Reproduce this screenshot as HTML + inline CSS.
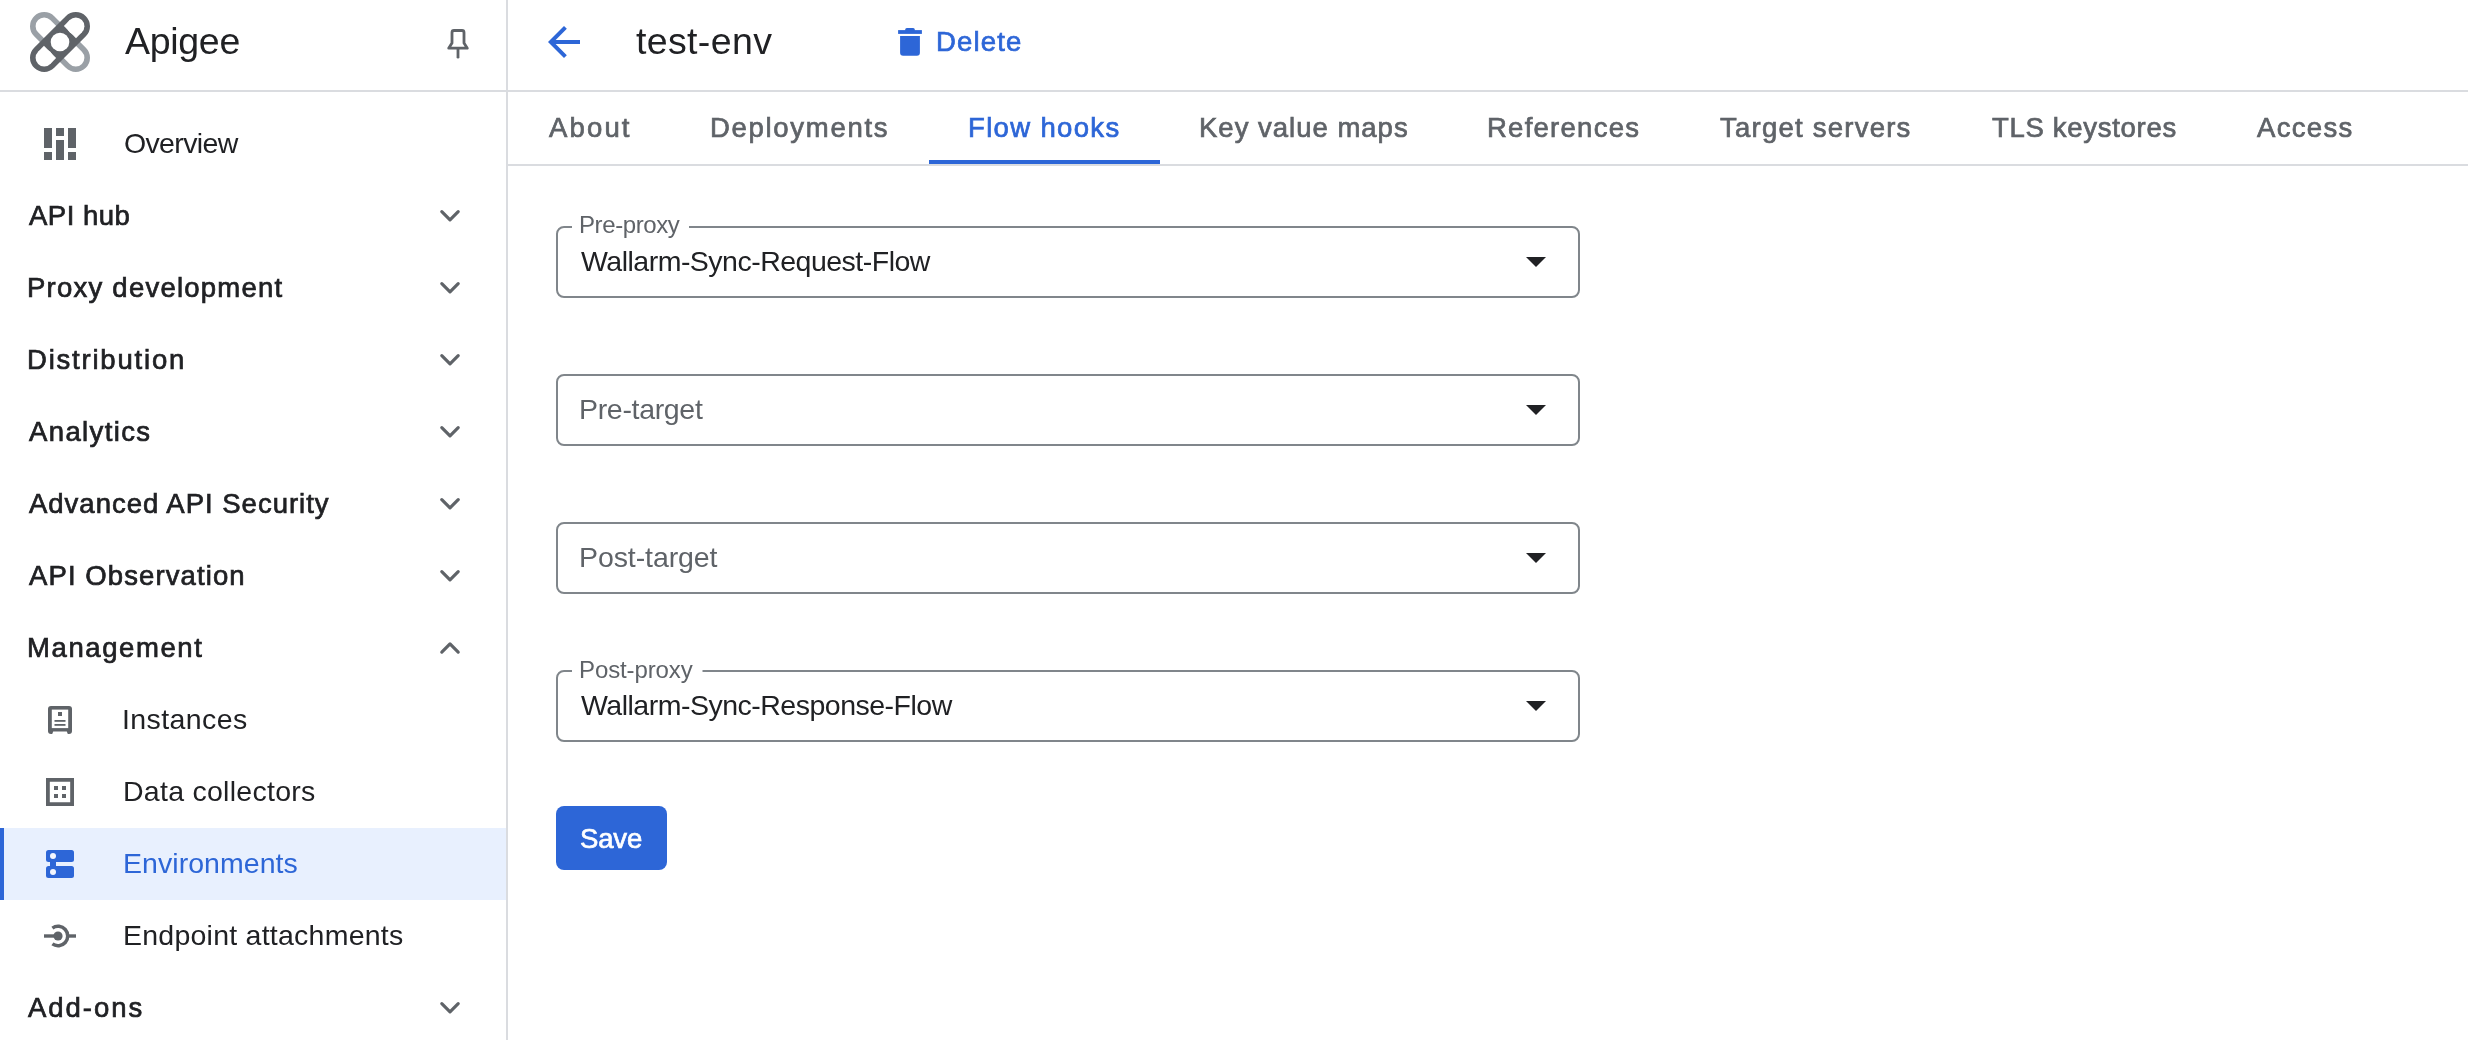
<!DOCTYPE html>
<html><head><meta charset="utf-8"><title>Apigee - test-env</title>
<style>
html,body{margin:0;padding:0;width:2468px;height:1040px;overflow:hidden;background:#ffffff;}
body{position:relative;font-family:"Liberation Sans",sans-serif;}
.t{position:absolute;white-space:nowrap;will-change:transform;font-family:"Liberation Sans",sans-serif;font-weight:400;}
svg.page{position:absolute;left:0;top:0;}
</style></head><body>
<svg class="page" width="2468" height="1040" viewBox="0 0 2468 1040">
<!-- environments highlight -->
<rect x="0" y="828" width="506" height="72" fill="#e8f0fe"/>
<rect x="0" y="828" width="4" height="72" fill="#2d66d7"/>
<!-- borders -->
<rect x="506" y="0" width="2" height="1040" fill="#dadce0"/>
<rect x="0" y="90" width="2468" height="2" fill="#dadce0"/>
<rect x="508" y="164" width="1960" height="2" fill="#dadce0"/>
<rect x="929" y="160" width="231" height="4" fill="#2d66d7"/>

<!-- Apigee logo -->
<g>
 <line x1="44.2" y1="26.2" x2="75.8" y2="57.8" stroke="#9aa0a6" stroke-width="28.4" stroke-linecap="round"/>
 <line x1="44.2" y1="26.2" x2="75.8" y2="57.8" stroke="#ffffff" stroke-width="17.2" stroke-linecap="round"/>
 <line x1="44.2" y1="57.8" x2="75.8" y2="26.2" stroke="#5f6368" stroke-width="28.4" stroke-linecap="round"/>
 <!-- end holes of dark pill -->
 <path d="M69.95,32.05 L75.8,26.2" stroke="#ffffff" stroke-width="17.2" stroke-linecap="butt"/>
 <circle cx="75.8" cy="26.2" r="8.6" fill="#ffffff"/>
 <path d="M50.05,51.95 L44.2,57.8" stroke="#ffffff" stroke-width="17.2" stroke-linecap="butt"/>
 <circle cx="44.2" cy="57.8" r="8.6" fill="#ffffff"/>
 <circle cx="60" cy="42" r="9.3" fill="#ffffff"/>
</g>

<!-- pin -->
<g fill="none" stroke="#5f6368" stroke-width="2.8" stroke-linejoin="round">
 <path d="M452,43 V32.5 Q452,30.5 454,30.5 H462 Q464,30.5 464,32.5 V43 L467.3,48.2 H448.7 Z"/>
 <line x1="458" y1="49" x2="458" y2="57.2" stroke-linecap="round"/>
</g>

<!-- overview icon -->
<g fill="#5f6368">
 <rect x="44" y="128" width="8" height="20"/><rect x="44" y="152" width="8" height="8"/>
 <rect x="56" y="128" width="8" height="8"/><rect x="56" y="140" width="8" height="20"/>
 <rect x="68" y="128" width="8" height="20"/><rect x="68" y="152" width="8" height="8"/>
</g>

<!-- chevrons -->
<g fill="none" stroke="#5f6368" stroke-width="3.2" stroke-linecap="round" stroke-linejoin="round">
 <polyline points="441.8,211.7 450,219.9 458.2,211.7"/>
 <polyline points="441.8,283.7 450,291.9 458.2,283.7"/>
 <polyline points="441.8,355.7 450,363.9 458.2,355.7"/>
 <polyline points="441.8,427.7 450,435.9 458.2,427.7"/>
 <polyline points="441.8,499.7 450,507.9 458.2,499.7"/>
 <polyline points="441.8,571.7 450,579.9 458.2,571.7"/>
 <polyline points="441.8,652.1 450,643.9 458.2,652.1"/>
 <polyline points="441.8,1003.7 450,1011.9 458.2,1003.7"/>
</g>

<!-- instances icon -->
<g>
 <rect x="48" y="706" width="24" height="28" rx="3" fill="#5f6368"/>
 <rect x="51.8" y="709.6" width="16.4" height="18.5" fill="#ffffff"/>
 <polygon points="53.2,731.6 66.8,731.6 68,734.5 52,734.5" fill="#ffffff"/>
 <rect x="58" y="712" width="4" height="4" fill="#5f6368"/>
 <rect x="54.5" y="720" width="11" height="1.8" fill="#5f6368"/>
 <rect x="54.5" y="724" width="11" height="1.8" fill="#5f6368"/>
</g>
<!-- data collectors icon -->
<g fill="#5f6368">
 <path d="M46,778 H74 V806 H46 Z M49.8,781.8 V802.2 H70.2 V781.8 Z" fill-rule="evenodd"/>
 <rect x="54" y="786" width="4" height="4"/><rect x="62" y="786" width="4" height="4"/>
 <rect x="54" y="794" width="4" height="4"/><rect x="62" y="794" width="4" height="4"/>
</g>
<!-- environments icon -->
<g>
 <rect x="46" y="850" width="28" height="12" rx="2.5" fill="#2d66d7"/>
 <rect x="46" y="866" width="28" height="12" rx="2.5" fill="#2d66d7"/>
 <rect x="50" y="860" width="6" height="8" fill="#2d66d7"/>
 <circle cx="53" cy="856" r="3" fill="#f3f6fe"/>
 <circle cx="53" cy="872" r="3" fill="#f3f6fe"/>
</g>
<!-- endpoint attachments icon -->
<g fill="#5f6368">
 <rect x="44" y="934.3" width="10" height="3.4"/>
 <rect x="69" y="934.3" width="7" height="3.4"/>
 <circle cx="58" cy="936" r="4.6"/>
 <path d="M52.4,928.1 A9.7,9.7 0 1 1 52.4,943.9" fill="none" stroke="#5f6368" stroke-width="3.5"/>
</g>

<!-- back arrow -->
<path transform="translate(540,18) scale(2)" d="M20 11H7.83l5.59-5.59L12 4l-8 8 8 8 1.41-1.41L7.83 13H20v-2z" fill="#2d66d7"/>
<!-- trash -->
<g fill="#2d66d7">
 <rect x="905.2" y="27.9" width="9.6" height="4" rx="1.6"/>
 <rect x="898.1" y="30.1" width="23.8" height="3.8"/>
 <path d="M900.1,36 H919.9 V52.8 A3,3 0 0 1 916.9,55.8 H903.1 A3,3 0 0 1 900.1,52.8 Z"/>
</g>

<!-- fields -->
<g fill="none" stroke="#80868b" stroke-width="2">
 <path d="M689,227 H1572 A7,7 0 0 1 1579,234 V290 A7,7 0 0 1 1572,297 H564 A7,7 0 0 1 557,290 V234 A7,7 0 0 1 564,227 H572"/>
 <rect x="557" y="375" width="1022" height="70" rx="7"/>
 <rect x="557" y="523" width="1022" height="70" rx="7"/>
 <path d="M702.5,671 H1572 A7,7 0 0 1 1579,678 V734 A7,7 0 0 1 1572,741 H564 A7,7 0 0 1 557,734 V678 A7,7 0 0 1 564,671 H572"/>
</g>
<g fill="#202124">
 <polygon points="1526,257 1546,257 1536,267"/>
 <polygon points="1526,405 1546,405 1536,415"/>
 <polygon points="1526,553 1546,553 1536,563"/>
 <polygon points="1526,701 1546,701 1536,711"/>
</g>
<!-- save button -->
<rect x="556" y="806" width="111" height="64" rx="8" fill="#2d66d7"/>
</svg>
<div class="t" id="apigee" style="left:124.50px;top:23.00px;font-size:37.5px;line-height:37.5px;letter-spacing:-0.300px;color:#202124;">Apigee</div>
<div class="t" id="overview" style="left:124.30px;top:129.00px;font-size:28.5px;line-height:28.5px;letter-spacing:-0.650px;color:#202124;">Overview</div>
<div class="t" id="apihub" style="left:28.60px;top:202.00px;font-size:27.5px;line-height:27.5px;letter-spacing:0.500px;color:#202124;-webkit-text-stroke:0.7px currentColor;">API hub</div>
<div class="t" id="proxydev" style="left:26.60px;top:274.00px;font-size:27.5px;line-height:27.5px;letter-spacing:1.237px;color:#202124;-webkit-text-stroke:0.7px currentColor;">Proxy development</div>
<div class="t" id="distr" style="left:26.60px;top:346.00px;font-size:27.5px;line-height:27.5px;letter-spacing:1.791px;color:#202124;-webkit-text-stroke:0.7px currentColor;">Distribution</div>
<div class="t" id="analytics" style="left:28.60px;top:418.00px;font-size:27.5px;line-height:27.5px;letter-spacing:1.375px;color:#202124;-webkit-text-stroke:0.7px currentColor;">Analytics</div>
<div class="t" id="advsec" style="left:28.60px;top:490.00px;font-size:27.5px;line-height:27.5px;letter-spacing:0.990px;color:#202124;-webkit-text-stroke:0.7px currentColor;">Advanced API Security</div>
<div class="t" id="apiobs" style="left:28.60px;top:562.00px;font-size:27.5px;line-height:27.5px;letter-spacing:1.100px;color:#202124;-webkit-text-stroke:0.7px currentColor;">API Observation</div>
<div class="t" id="mgmt" style="left:26.60px;top:634.00px;font-size:27.5px;line-height:27.5px;letter-spacing:1.589px;color:#202124;-webkit-text-stroke:0.7px currentColor;">Management</div>
<div class="t" id="instances" style="left:122.20px;top:705.00px;font-size:28.5px;line-height:28.5px;letter-spacing:0.400px;color:#202124;">Instances</div>
<div class="t" id="datacol" style="left:123.20px;top:777.00px;font-size:28.5px;line-height:28.5px;letter-spacing:0.271px;color:#202124;">Data collectors</div>
<div class="t" id="envs" style="left:123.20px;top:849.00px;font-size:28.5px;line-height:28.5px;letter-spacing:0.055px;color:#2d66d7;">Environments</div>
<div class="t" id="endpoint" style="left:123.20px;top:921.00px;font-size:28.5px;line-height:28.5px;letter-spacing:0.242px;color:#202124;">Endpoint attachments</div>
<div class="t" id="addons" style="left:28.40px;top:994.00px;font-size:27.5px;line-height:27.5px;letter-spacing:1.967px;color:#202124;-webkit-text-stroke:0.7px currentColor;">Add-ons</div>
<div class="t" id="testenv" style="left:636.00px;top:23.00px;font-size:37.5px;line-height:37.5px;letter-spacing:0.357px;color:#202124;">test-env</div>
<div class="t" id="delete" style="left:936.20px;top:28.00px;font-size:27.5px;line-height:27.5px;letter-spacing:1.180px;color:#2d66d7;-webkit-text-stroke:0.7px currentColor;">Delete</div>
<div class="t" id="t_about" style="left:549.00px;top:114.00px;font-size:27.5px;line-height:27.5px;letter-spacing:2.150px;color:#5f6368;-webkit-text-stroke:0.7px currentColor;">About</div>
<div class="t" id="t_deploy" style="left:710.40px;top:114.00px;font-size:27.5px;line-height:27.5px;letter-spacing:1.700px;color:#5f6368;-webkit-text-stroke:0.7px currentColor;">Deployments</div>
<div class="t" id="t_flow" style="left:968.20px;top:114.00px;font-size:27.5px;line-height:27.5px;letter-spacing:1.344px;color:#2d66d7;-webkit-text-stroke:0.7px currentColor;">Flow hooks</div>
<div class="t" id="t_kvm" style="left:1199.00px;top:114.00px;font-size:27.5px;line-height:27.5px;letter-spacing:1.000px;color:#5f6368;-webkit-text-stroke:0.7px currentColor;">Key value maps</div>
<div class="t" id="t_refs" style="left:1486.90px;top:114.00px;font-size:27.5px;line-height:27.5px;letter-spacing:1.256px;color:#5f6368;-webkit-text-stroke:0.7px currentColor;">References</div>
<div class="t" id="t_target" style="left:1720.20px;top:114.00px;font-size:27.5px;line-height:27.5px;letter-spacing:1.238px;color:#5f6368;-webkit-text-stroke:0.7px currentColor;">Target servers</div>
<div class="t" id="t_tls" style="left:1992.30px;top:114.00px;font-size:27.5px;line-height:27.5px;letter-spacing:0.700px;color:#5f6368;-webkit-text-stroke:0.7px currentColor;">TLS keystores</div>
<div class="t" id="t_access" style="left:2257.30px;top:114.00px;font-size:27.5px;line-height:27.5px;letter-spacing:1.340px;color:#5f6368;-webkit-text-stroke:0.7px currentColor;">Access</div>
<div class="t" id="lbl_pre" style="left:579.00px;top:213.00px;font-size:24px;line-height:24px;letter-spacing:-0.400px;color:#5f6368;">Pre-proxy</div>
<div class="t" id="val_req" style="left:581.10px;top:247.00px;font-size:28.5px;line-height:28.5px;letter-spacing:-0.508px;color:#202124;">Wallarm-Sync-Request-Flow</div>
<div class="t" id="ph_pretarget" style="left:579.10px;top:395.00px;font-size:28.5px;line-height:28.5px;letter-spacing:-0.322px;color:#5f6368;">Pre-target</div>
<div class="t" id="ph_posttarget" style="left:579.10px;top:543.00px;font-size:28.5px;line-height:28.5px;letter-spacing:-0.090px;color:#5f6368;">Post-target</div>
<div class="t" id="lbl_post" style="left:579.00px;top:657.50px;font-size:24px;line-height:24px;letter-spacing:-0.111px;color:#5f6368;">Post-proxy</div>
<div class="t" id="val_resp" style="left:581.00px;top:691.00px;font-size:28.5px;line-height:28.5px;letter-spacing:-0.500px;color:#202124;">Wallarm-Sync-Response-Flow</div>
<div class="t" id="save" style="left:580.25px;top:825.00px;font-size:27.5px;line-height:27.5px;letter-spacing:-0.167px;color:#ffffff;-webkit-text-stroke:0.7px currentColor;">Save</div>
</body></html>
